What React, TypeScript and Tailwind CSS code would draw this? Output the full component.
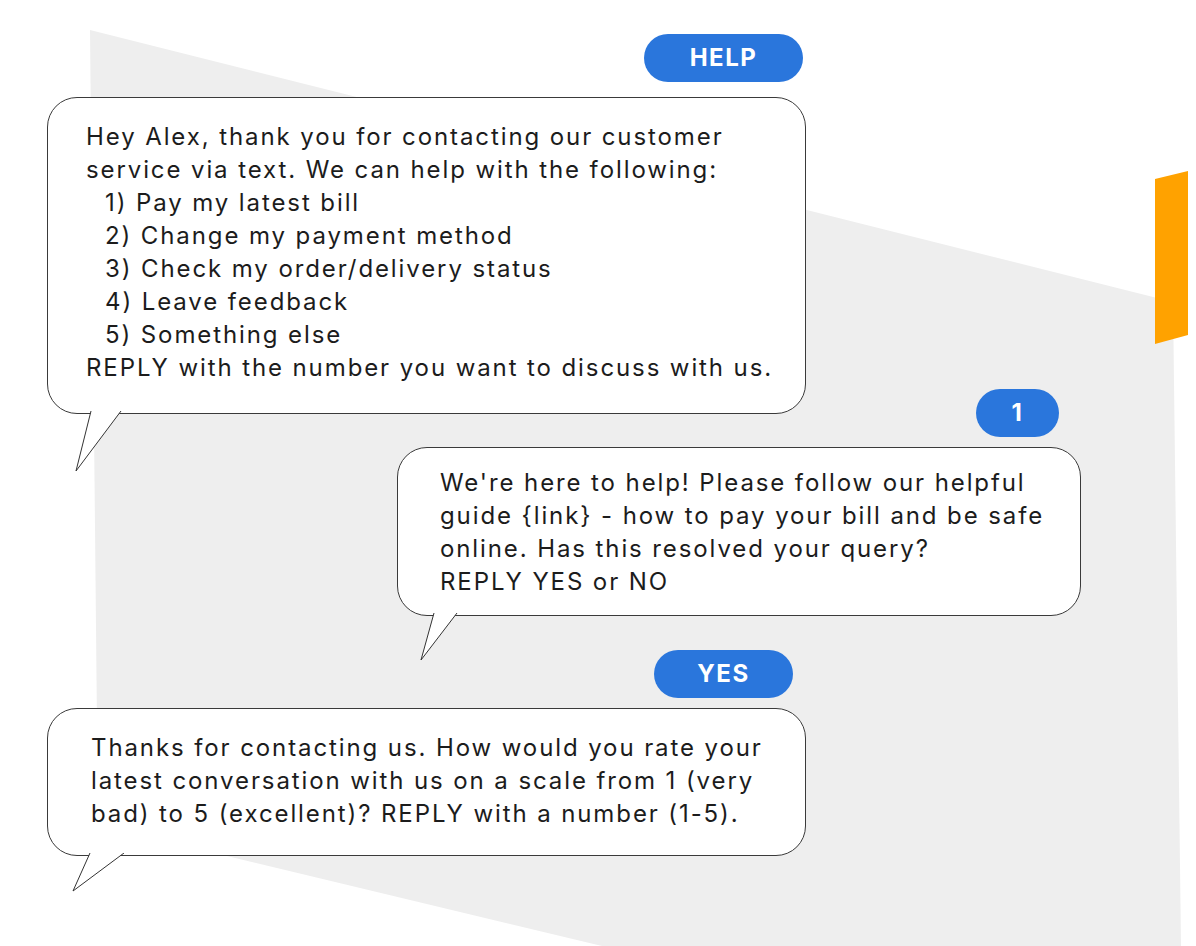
import type { ReactNode } from 'react';

const font = { fontFamily: 'Inter, "Noto Sans", sans-serif' };

function Pill({ label, className }: { label: string; className: string }) {
  return (
    <div
      className={`flex h-[48px] items-center justify-center rounded-full bg-[#2a76dc] text-[24px] font-bold leading-none tracking-[1.5px] text-white ${className}`}
    >
      {label}
    </div>
  );
}

// speech-bubble tail, hangs under the bubble's bottom border
function Tail({ left, points, w, h }: { left: number; points: string; w: number; h: number }) {
  return (
    <svg
      className="absolute top-[calc(100%-2px)]"
      style={{ left }}
      width={w}
      height={h}
      viewBox={`0 0 ${w} ${h}`}
    >
      <polyline points={points} fill="#fff" stroke="#333" strokeWidth="1" />
    </svg>
  );
}

function Bubble({ className, tail, children }: { className: string; tail: ReactNode; children: ReactNode }) {
  return (
    <div
      className={`relative rounded-[30px] border border-[#3a3a3a] bg-white text-[24px] leading-[33px] tracking-[1.9px] text-[#1c1c1c] ${className}`}
    >
      {children}
      {tail}
    </div>
  );
}

export default function App() {
  return (
    <div className="relative h-[946px] w-[1196px] overflow-hidden bg-white" style={font}>
      <svg className="absolute inset-0" width="1196" height="946" viewBox="0 0 1196 946">
        <polygon points="90,30 1173,302 1181,946 602,946 98,825" fill="#eeeeee" />
        <polygon points="1155,179 1188,171 1188,335 1155,344" fill="#ffa200" />
      </svg>

      <div className="relative flex flex-col pt-[34px]">
        <Pill label="HELP" className="ml-[644px] w-[159px]" />

        <Bubble
          className="ml-[47px] mt-[15px] h-[317px] w-[759px] pl-[38px] pt-[22px]"
          tail={<Tail left={20} w={60} h={62} points="23,0 8,60 53,0" />}
        >
          <p>Hey Alex, thank you for contacting our customer</p>
          <p>service via text. We can help with the following:</p>
          <div className="pl-[19px]">
            <p>1) Pay my latest bill</p>
            <p>2) Change my payment method</p>
            <p>3) Check my order/delivery status</p>
            <p>4) Leave feedback</p>
            <p>5) Something else</p>
          </div>
          <p>REPLY with the number you want to discuss with us.</p>
        </Bubble>

        <Pill label="1" className="ml-[976px] mt-[-25px] w-[83px]" />

        <Bubble
          className="ml-[397px] mt-[10px] h-[169px] w-[684px] pl-[42px] pt-[18px]"
          tail={<Tail left={15} w={50} h={50} points="21,0 8,47 44,0" />}
        >
          <p>We're here to help! Please follow our helpful</p>
          <p>guide {'{link}'} - how to pay your bill and be safe</p>
          <p>online. Has this resolved your query?</p>
          <p>REPLY YES or NO</p>
        </Bubble>

        <Pill label="YES" className="ml-[654px] mt-[34px] h-[47px] w-[139px]" />

        <Bubble
          className="ml-[47px] mt-[10px] h-[148px] w-[759px] pl-[43px] pt-[22px]"
          tail={<Tail left={20} w={60} h={42} points="22,0 5,38 56,0" />}
        >
          <p>Thanks for contacting us. How would you rate your</p>
          <p>latest conversation with us on a scale from 1 (very</p>
          <p>bad) to 5 (excellent)? REPLY with a number (1-5).</p>
        </Bubble>
      </div>
    </div>
  );
}
